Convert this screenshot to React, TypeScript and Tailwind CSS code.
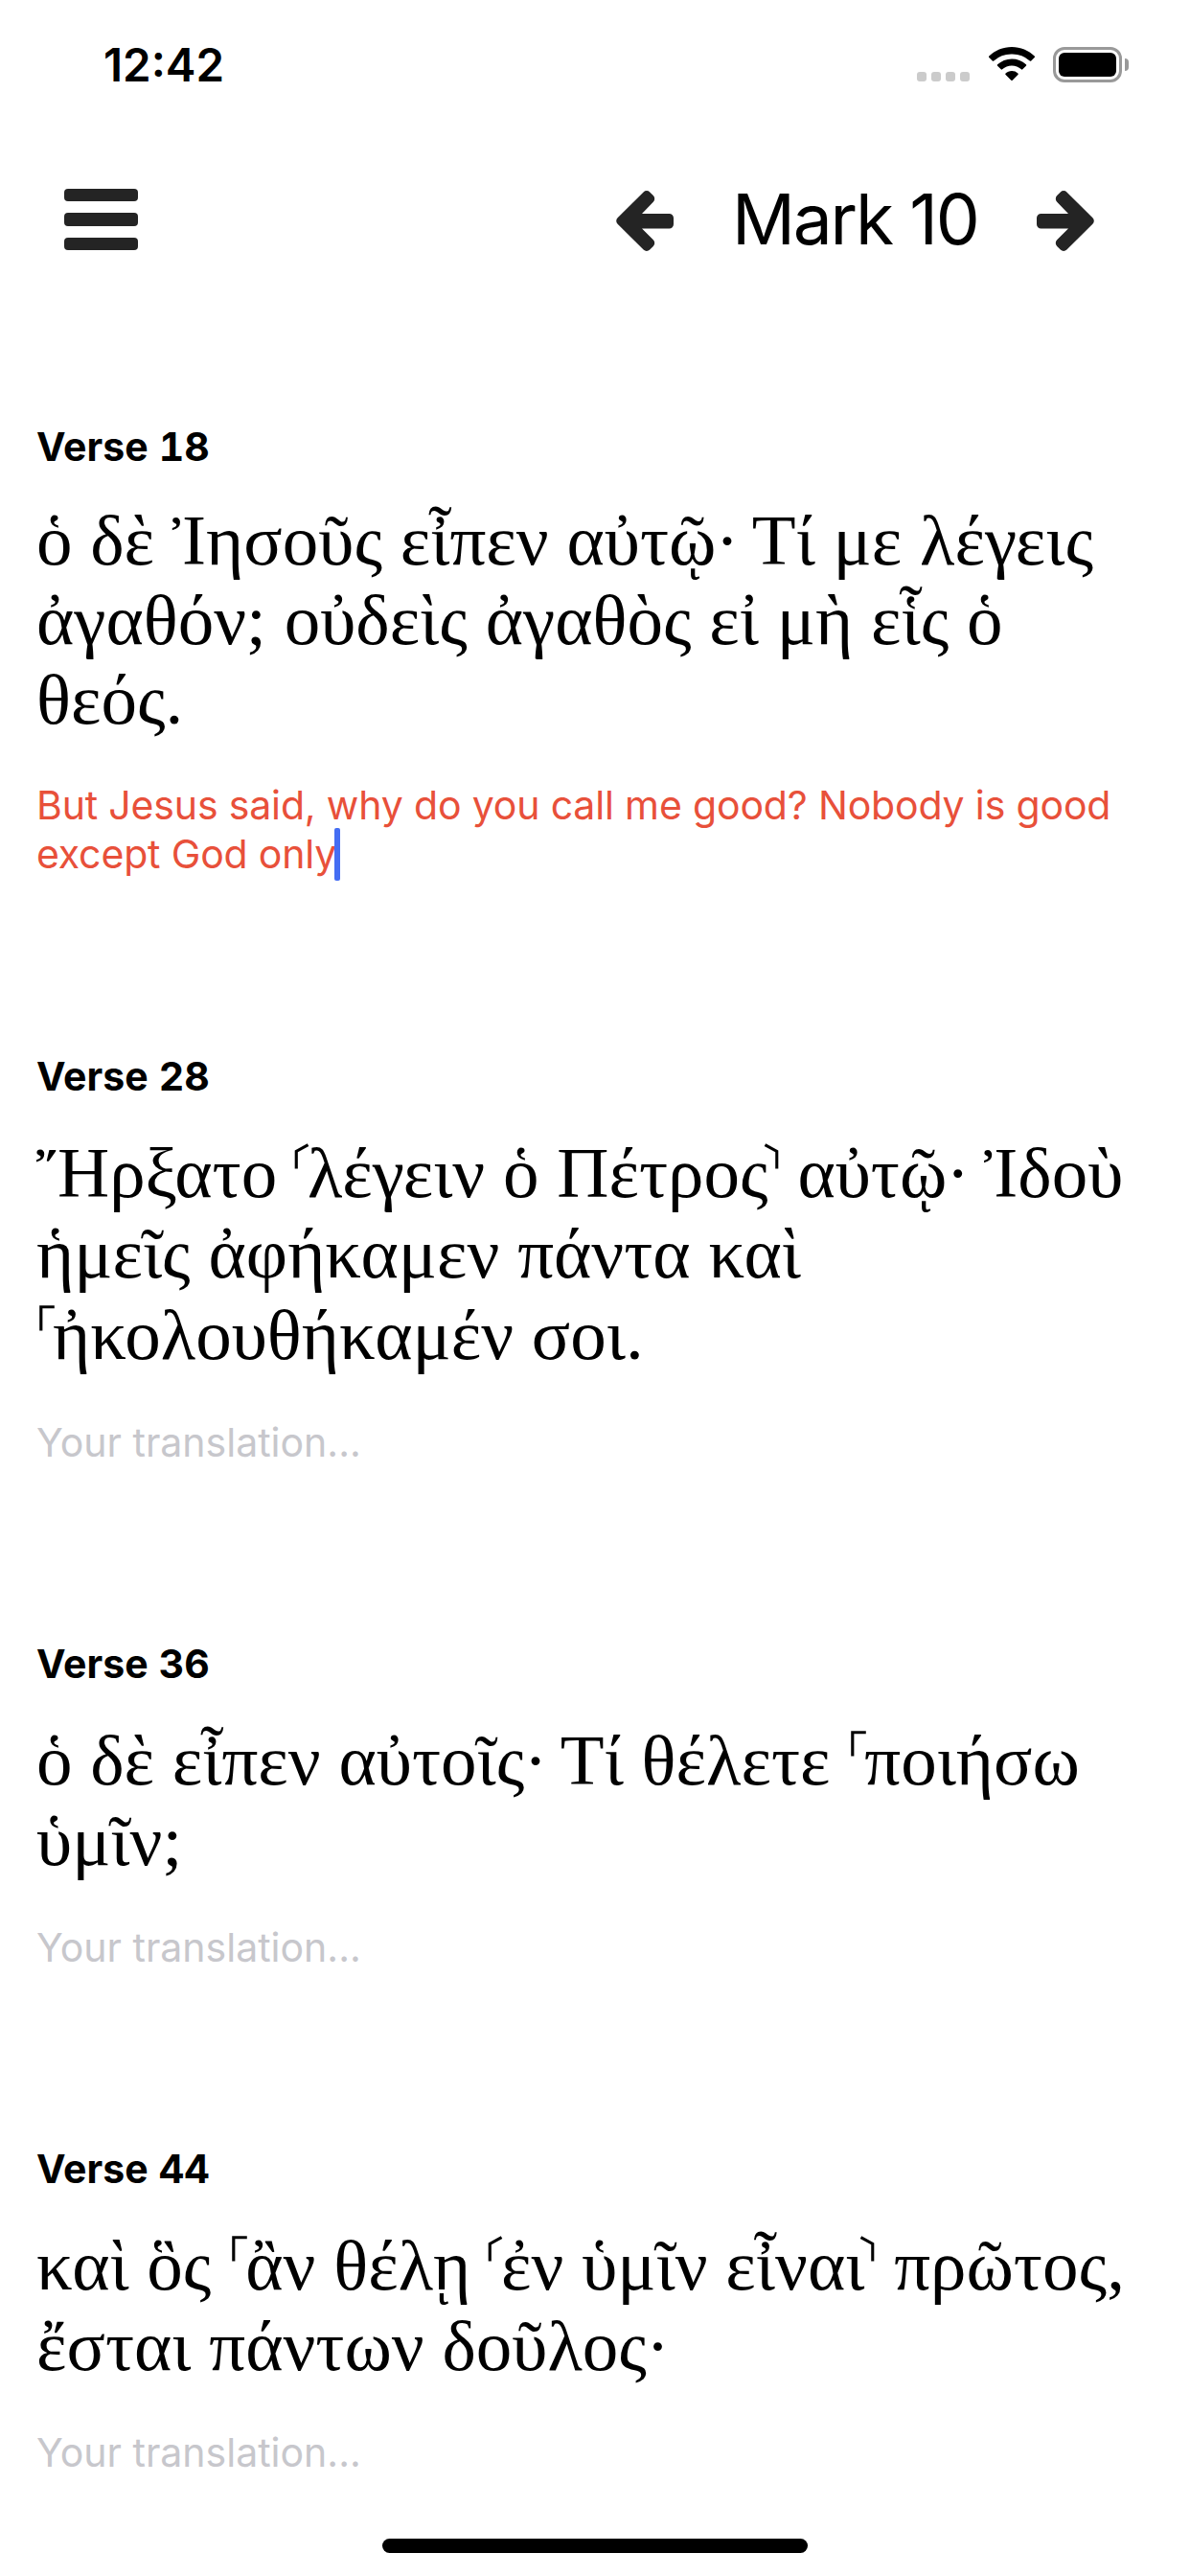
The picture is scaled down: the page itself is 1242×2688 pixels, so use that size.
type Line = { text: string; height: string };
type Verse = { id: number; top: string; greekTop: string; inputTop: string; lines: Line[] };

const verses: Verse[] = [
  {
    id: 18,
    top: 'mt-[105px]',
    greekTop: 'mt-[31px]',
    inputTop: 'mt-[44px]',
    lines: [
      { text: 'ὁ δὲ Ἰησοῦς εἶπεν αὐτῷ· Τί με λέγεις', height: 'h-[83px]' },
      { text: 'ἀγαθόν; οὐδεὶς ἀγαθὸς εἰ μὴ εἷς ὁ', height: 'h-[83px]' },
      { text: 'θεός.', height: 'h-[83px]' },
    ],
  },
  {
    id: 28,
    top: 'mt-[181px]',
    greekTop: 'mt-[34px]',
    inputTop: 'mt-[45px]',
    lines: [
      { text: 'Ἤρξατο ⸂λέγειν ὁ Πέτρος⸃ αὐτῷ· Ἰδοὺ', height: 'h-[84px]' },
      { text: 'ἡμεῖς ἀφήκαμεν πάντα καὶ', height: 'h-[85px]' },
      { text: '⸀ἠκολουθήκαμέν σοι.', height: 'h-[84px]' },
    ],
  },
  {
    id: 36,
    top: 'mt-[180px]',
    greekTop: 'mt-[34px]',
    inputTop: 'mt-[44px]',
    lines: [
      { text: 'ὁ δὲ εἶπεν αὐτοῖς· Τί θέλετε ⸀ποιήσω', height: 'h-[84px]' },
      { text: 'ὑμῖν;', height: 'h-[84px]' },
    ],
  },
  {
    id: 44,
    top: 'mt-[180px]',
    greekTop: 'mt-[34px]',
    inputTop: 'mt-[44px]',
    lines: [
      { text: 'καὶ ὃς ⸀ἂν θέλῃ ⸂ἐν ὑμῖν εἶναι⸃ πρῶτος,', height: 'h-[84px]' },
      { text: 'ἔσται πάντων δοῦλος·', height: 'h-[84px]' },
    ],
  },
];

/* Editorial marks are set smaller and raised; the ano teleia is set tight. */
const markStyles: Record<string, string> = {
  '·': '-ml-px -mr-[4px]',
  '⸀': 'relative -left-[4px] -top-[13px] inline-block w-[17px] text-[60px] leading-[20px]',
  '⸂': 'relative -left-[8px] -top-[13px] inline-block w-[13px] text-[60px] leading-[20px]',
  '⸃': 'relative -left-[12px] -top-[13px] inline-block w-[12px] text-[60px] leading-[20px]',
};

function Greek({ text }: { text: string }) {
  return (
    <>
      {text.split(/([⸀⸂⸃·])/).map((part, i) =>
        markStyles[part] ? (
          <span key={i} className={markStyles[part]}>
            {part}
          </span>
        ) : (
          part
        ),
      )}
    </>
  );
}

function Arrow({ flip }: { flip?: boolean }) {
  return (
    <svg viewBox="0 0 60 63" className={flip ? 'h-[63px] w-[60px] -scale-x-100' : 'h-[63px] w-[60px]'} fill="#242424">
      <path d="M1.6 28.2 28.6 1.4a4.6 4.6 0 0 1 6.6 0l3.6 3.7a4.6 4.6 0 0 1 0 6.6L27 24h28.500a4.500 4.500 0 0 1 4.500 4.500v6.500a4.500 4.500 0 0 1-4.500 4.500H27l11.800 11.800a4.600 4.600 0 0 1 0 6.600l-3.600 3.600a4.600 4.600 0 0 1-6.600 0L1.600 34.800a4.600 4.600 0 0 1 0-6.600z" />
    </svg>
  );
}

function StatusBar() {
  return (
    <header className="flex h-[132px] shrink-0 items-start justify-between pl-[108px] pr-[64px]">
      <div className="mt-[39px] text-[47.500px] font-semibold leading-[58px]">12:42</div>
      <div className="mt-[49px] flex items-start">
        <div className="mt-[26px] flex gap-[5px]">
          {[0, 1, 2, 3].map((i) => (
            <span key={i} className="size-[10px] rounded-[3px] bg-[#cbcbcb]" />
          ))}
        </div>
        <svg viewBox="0 0 48 36" className="ml-[20px] h-[36px] w-[48px]">
          <path d="M24 0C14.800 0 6.400 3.600.300 9.500a1 1 0 0 0 0 1.400l3.500 3.600a1 1 0 0 0 1.400 0A27 27 0 0 1 24 7.500a27 27 0 0 1 18.800 7 1 1 0 0 0 1.400 0l3.500-3.600a1 1 0 0 0 0-1.400C41.600 3.600 33.200 0 24 0z" />
          <path d="M24 12.400c-5.700 0-10.900 2.200-14.900 5.800a1 1 0 0 0 0 1.500l3.600 3.600a1 1 0 0 0 1.400 0 14.700 14.700 0 0 1 19.800 0 1 1 0 0 0 1.400 0l3.600-3.600a1 1 0 0 0 0-1.500A22 22 0 0 0 24 12.400z" />
          <path d="M24 25c-2.500 0-4.700.9-6.400 2.400a1 1 0 0 0 0 1.500l5.700 5.800a1 1 0 0 0 1.400 0l5.700-5.800a1 1 0 0 0 0-1.500A9.600 9.600 0 0 0 24 25z" />
        </svg>
        <div className="ml-[19px] flex h-[37px] w-[72px] rounded-[12px] border-[3px] border-[#999] p-[3px]">
          <div className="h-full w-full rounded-[6px] bg-black" />
        </div>
        <div className="ml-[3px] mt-[12px] h-[13px] w-[4px] rounded-r-full bg-[#999]" />
      </div>
    </header>
  );
}

export default function App() {
  return (
    <div className="flex h-[2688px] w-[1242px] flex-col overflow-hidden bg-white font-['Inter',sans-serif] text-black">
      <StatusBar />

      <nav className="flex h-[204px] shrink-0 items-start pl-[67px]">
        <button className="mt-[64.500px] flex w-[77px] flex-col gap-[12.500px]" aria-label="Menu">
          <span className="h-[13.300px] w-full rounded-[4px] bg-[#242424]" />
          <span className="h-[13.300px] w-full rounded-[4px] bg-[#242424]" />
          <span className="h-[13.300px] w-full rounded-[4px] bg-[#242424]" />
        </button>
        <div className="ml-[499px] mt-[67px] flex h-[63px] items-center">
          <Arrow />
          <div className="mb-[4px] ml-[61px] w-[318px] whitespace-nowrap text-[73px] leading-[63px] tracking-[-2.200px]">
            Mark 10
          </div>
          <Arrow flip />
        </div>
      </nav>

      <main className="flex flex-col pl-[38px]">
        {verses.map((v) => (
          <section key={v.id} className={v.top}>
            <h2 className="h-[50px] text-[41px] font-bold leading-[50px] tabular-nums">Verse {v.id}</h2>
            <div className={`${v.greekTop} font-['Liberation_Serif','DejaVu_Serif',serif] text-[75px]`}>
              {v.lines.map((l) => (
                <div key={l.text} className={`${l.height} whitespace-nowrap leading-[83px]`}>
                  <Greek text={l.text} />
                </div>
              ))}
            </div>
            {v.id === 18 ? (
              <p className={`${v.inputTop} whitespace-nowrap text-[41px] leading-[51px] tracking-[-0.160px] text-[#e8503a]`}>
                But Jesus said, why do you call me good? Nobody is good
                <br />
                <span className="relative">
                  except God only
                  <span className="absolute -right-[4px] top-[-2px] h-[55px] w-[6px] rounded-[2px] bg-[#446df3]" />
                </span>
              </p>
            ) : (
              <p className={`${v.inputTop} text-[41px] leading-[51px] text-[#c7c7cc]`}>Your translation...</p>
            )}
          </section>
        ))}
      </main>

      <div className="mx-auto mb-[24px] mt-auto h-[15px] w-[444px] shrink-0 rounded-full bg-black" />
    </div>
  );
}
